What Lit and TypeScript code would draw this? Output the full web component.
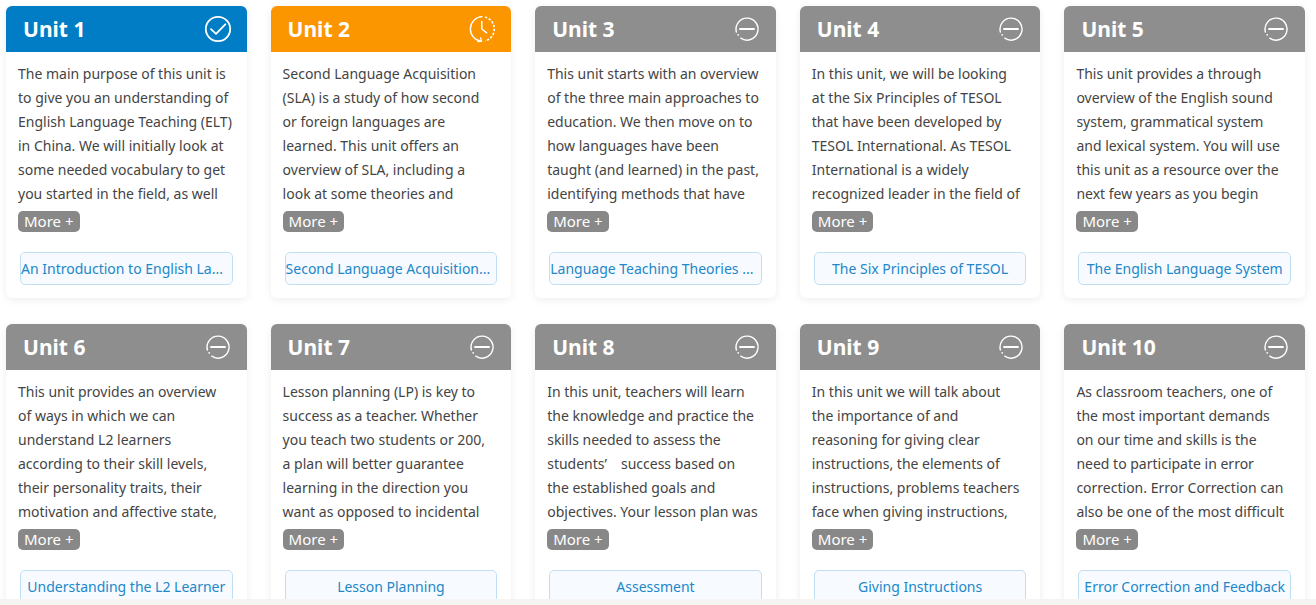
import { LitElement, html, css, svg } from "lit";
import { customElement, property } from "lit/decorators.js";
import { classMap } from "lit/directives/class-map.js";

type Status = "done" | "active" | "locked";

interface Unit {
  title: string;
  status: Status;
  text: string;
  lesson: string;
}

const UNITS: Unit[] = [
  {
    title: "Unit 1",
    status: "done",
    text: "The main purpose of this unit is\nto give you an understanding of\nEnglish Language Teaching (ELT)\nin China. We will initially look at\nsome needed vocabulary to get\nyou started in the field, as well",
    lesson: "An Introduction to English La...",
  },
  {
    title: "Unit 2",
    status: "active",
    text: "Second Language Acquisition\n(SLA) is a study of how second\nor foreign languages are\nlearned. This unit offers an\noverview of SLA, including a\nlook at some theories and",
    lesson: "Second Language Acquisition...",
  },
  {
    title: "Unit 3",
    status: "locked",
    text: "This unit starts with an overview\nof the three main approaches to\neducation. We then move on to\nhow languages have been\ntaught (and learned) in the past,\nidentifying methods that have",
    lesson: "Language Teaching Theories ...",
  },
  {
    title: "Unit 4",
    status: "locked",
    text: "In this unit, we will be looking\nat the Six Principles of TESOL\nthat have been developed by\nTESOL International. As TESOL\nInternational is a widely\nrecognized leader in the field of",
    lesson: "The Six Principles of TESOL",
  },
  {
    title: "Unit 5",
    status: "locked",
    text: "This unit provides a through\noverview of the English sound\nsystem, grammatical system\nand lexical system. You will use\nthis unit as a resource over the\nnext few years as you begin",
    lesson: "The English Language System",
  },
  {
    title: "Unit 6",
    status: "locked",
    text: "This unit provides an overview\nof ways in which we can\nunderstand L2 learners\naccording to their skill levels,\ntheir personality traits, their\nmotivation and affective state,",
    lesson: "Understanding the L2 Learner",
  },
  {
    title: "Unit 7",
    status: "locked",
    text: "Lesson planning (LP) is key to\nsuccess as a teacher. Whether\nyou teach two students or 200,\na plan will better guarantee\nlearning in the direction you\nwant as opposed to incidental",
    lesson: "Lesson Planning",
  },
  {
    title: "Unit 8",
    status: "locked",
    text: "In this unit, teachers will learn\nthe knowledge and practice the\nskills needed to assess the\nstudents\u2019\u2003success based on\nthe established goals and\nobjectives. Your lesson plan was",
    lesson: "Assessment",
  },
  {
    title: "Unit 9",
    status: "locked",
    text: "In this unit we will talk about\nthe importance of and\nreasoning for giving clear\ninstructions, the elements of\ninstructions, problems teachers\nface when giving instructions,",
    lesson: "Giving Instructions",
  },
  {
    title: "Unit 10",
    status: "locked",
    text: "As classroom teachers, one of\nthe most important demands\non our time and skills is the\nneed to participate in error\ncorrection. Error Correction can\nalso be one of the most difficult",
    lesson: "Error Correction and Feedback",
  },
];

const ICONS = {
  done: svg`
    <circle cx="14" cy="14" r="12.2" stroke-width="1.8" />
    <path d="M7 14.2 L12 18.8 L21.3 9.3" stroke-width="1.8" />`,
  active: svg`
    <path d="M14 1.6 A12.4 12.4 0 0 0 13.4 26.3" stroke-width="1.4" />
    <path d="M12.6 22.8 L13.6 26.4 L9.8 26.6" stroke-width="1.3" />
    <path d="M17 2 A12.4 12.4 0 0 1 17 26" stroke-width="1.6" stroke-linecap="butt" stroke-dasharray="2.4 1.6" />
    <path d="M13.8 6.5 V14 L18.6 17.8" stroke-width="1.5" />`,
  locked: svg`
    <path d="M3.4 17 A11 11 0 1 1 7.8 23.2" stroke-width="1.4" />
    <path d="M7 14 H21" stroke-width="1.8" />
    <circle cx="5.2" cy="19.8" r="0.9" fill="#fff" stroke="none" />`,
};

@customElement("unit-card")
export class UnitCard extends LitElement {
  @property({ attribute: false }) unit!: Unit;

  static styles = css`
    :host {
      display: block;
      min-width: 0;
    }
    .card {
      border-radius: 6px;
      background: #fff;
      box-shadow: 0 2px 8px rgba(0, 0, 0, 0.07);
      overflow: hidden;
    }
    .head {
      display: flex;
      align-items: center;
      justify-content: space-between;
      height: 46px;
      padding: 0 15px 0 17px;
      color: #fff;
    }
    .done {
      background: #007dc5;
    }
    .active {
      background: #fb9500;
    }
    .locked {
      background: #8e8e8e;
    }
    .title {
      margin: 0;
      font-size: 21px;
      line-height: 46px;
      font-weight: 700;
    }
    .icon {
      width: 28px;
      height: 28px;
      fill: none;
      stroke: #fff;
      stroke-linecap: round;
      stroke-linejoin: round;
    }
    .body {
      padding: 10px 12px 13px;
    }
    .text {
      margin: 0;
      font-size: 14px;
      line-height: 24px;
      white-space: pre;
      color: #444;
    }
    .more {
      display: block;
      height: 21px;
      margin: 5px 0 20px;
      padding: 0 6px;
      border: 0;
      border-radius: 5px;
      background: #888;
      color: #fff;
      font: inherit;
      font-size: 15px;
      line-height: 21px;
      cursor: pointer;
    }
    .lesson {
      display: block;
      margin: 0 2px;
      border: 1px solid #c0dff2;
      border-radius: 5px;
      background: #f7fbff;
      color: #2187c9;
      font-size: 14px;
      line-height: 31px;
      text-align: center;
      text-decoration: none;
      white-space: nowrap;
    }
    .shortened {
      text-align: left;
    }
  `;

  render() {
    const { title, status, text, lesson } = this.unit;
    const lessonClasses = { lesson: true, shortened: lesson.endsWith("...") };
    return html`
      <article class="card">
        <header class="head ${status}">
          <h2 class="title">${title}</h2>
          <svg class="icon" viewBox="0 0 28 28" aria-hidden="true">${ICONS[status]}</svg>
        </header>
        <div class="body">
          <p class="text">${text}</p>
          <button class="more" type="button">More +</button>
          <a class=${classMap(lessonClasses)} href="#">${lesson}</a>
        </div>
      </article>
    `;
  }
}

@customElement("app-root")
export class AppRoot extends LitElement {
  static styles = css`
    :host {
      display: flex;
      flex-direction: column;
      height: 100vh;
      background: #f5f4f3;
      font-family: "Noto Sans", "Open Sans", sans-serif;
    }
    .units {
      flex: 1;
      min-height: 0;
      box-sizing: border-box;
      margin-bottom: 6px;
      padding: 6px 11px 0 6px;
      overflow: hidden;
      background: #fff;
    }
    .grid {
      display: grid;
      grid-template-columns: repeat(5, minmax(0, 1fr));
      gap: 26px 24px;
    }
  `;

  render() {
    return html`
      <main class="units">
        <div class="grid">${UNITS.map((u) => html`<unit-card .unit=${u}></unit-card>`)}</div>
      </main>
    `;
  }
}
